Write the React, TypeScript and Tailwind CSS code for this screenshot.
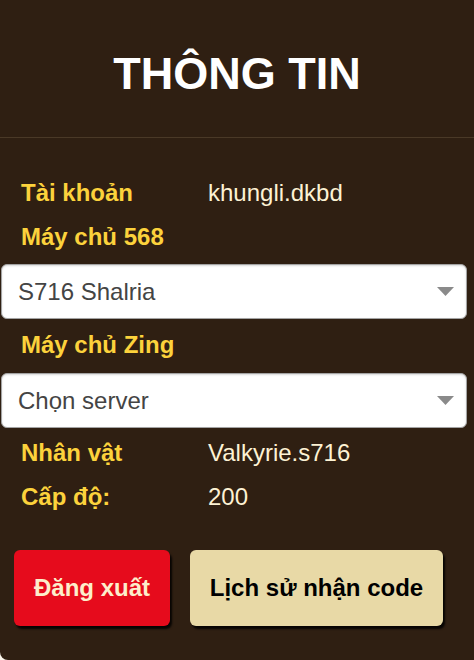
const labelCls = "w-[187px] shrink-0 font-bold text-[#fcd23c]";
const valueCls = "text-[#fdf2d4]";

function InfoRow({ label, value }: { label: string; value?: string }) {
  return (
    <div className="flex h-[44px] items-center pl-[21px] leading-[44px]">
      <span className={labelCls}>{label}</span>
      {value && <span className={valueCls}>{value}</span>}
    </div>
  );
}

function ServerSelect({ text }: { text: string }) {
  return (
    <div className="ml-[1px] mr-[7px] flex h-[55px] items-center justify-between rounded-[6px] border border-[#a3a3a3] bg-white pl-[16px] pr-[12px] text-[#444444] shadow-[inset_0_1px_2px_rgba(0,0,0,0.15)]">
      <span>{text}</span>
      <svg width="17" height="9" viewBox="0 0 17 9">
        <path d="M0 0 L17 0 L8.5 9 Z" fill="#8a8a8a" />
      </svg>
    </div>
  );
}

export default function App() {
  return (
    <div className="min-h-screen bg-[#fbf6ec]">
      <div
        className="h-[660px] w-[474px] rounded-bl-[8px] bg-[#2f1f12] text-[24px]"
        style={{ fontFamily: '"Liberation Sans", Arial, sans-serif' }}
      >
        {/* Header */}
        <div className="flex h-[138px] items-center justify-center border-b border-[#4a3927] pt-[10px]">
          <h1 className="text-[45px] font-bold text-white">THÔNG TIN</h1>
        </div>

        {/* Info */}
        <div className="pt-[33px]">
          <InfoRow label="Tài khoản" value="khungli.dkbd" />
          <InfoRow label="Máy chủ 568" />
          <div className="mt-[5px]">
            <ServerSelect text="S716 Shalria" />
          </div>
          <div className="mt-[4px]">
            <InfoRow label="Máy chủ Zing" />
          </div>
          <div className="mt-[6px]">
            <ServerSelect text="Chọn server" />
          </div>
          <div className="mt-[3px]">
            <InfoRow label="Nhân vật" value="Valkyrie.s716" />
            <InfoRow label="Cấp độ:" value="200" />
          </div>
        </div>

        {/* Actions */}
        <div className="mt-[31px] flex gap-[20px] pl-[14px]">
          <button className="h-[76px] w-[156px] rounded-[6px] bg-[#e60b1c] font-bold text-[#fdeecb] shadow-[2px_3px_2px_rgba(0,0,0,0.85)]">
            Đăng xuất
          </button>
          <button className="h-[76px] w-[253px] rounded-[6px] bg-[#e8d9a6] font-bold text-black shadow-[2px_3px_2px_rgba(0,0,0,0.85)]">
            Lịch sử nhận code
          </button>
        </div>
      </div>
    </div>
  );
}
